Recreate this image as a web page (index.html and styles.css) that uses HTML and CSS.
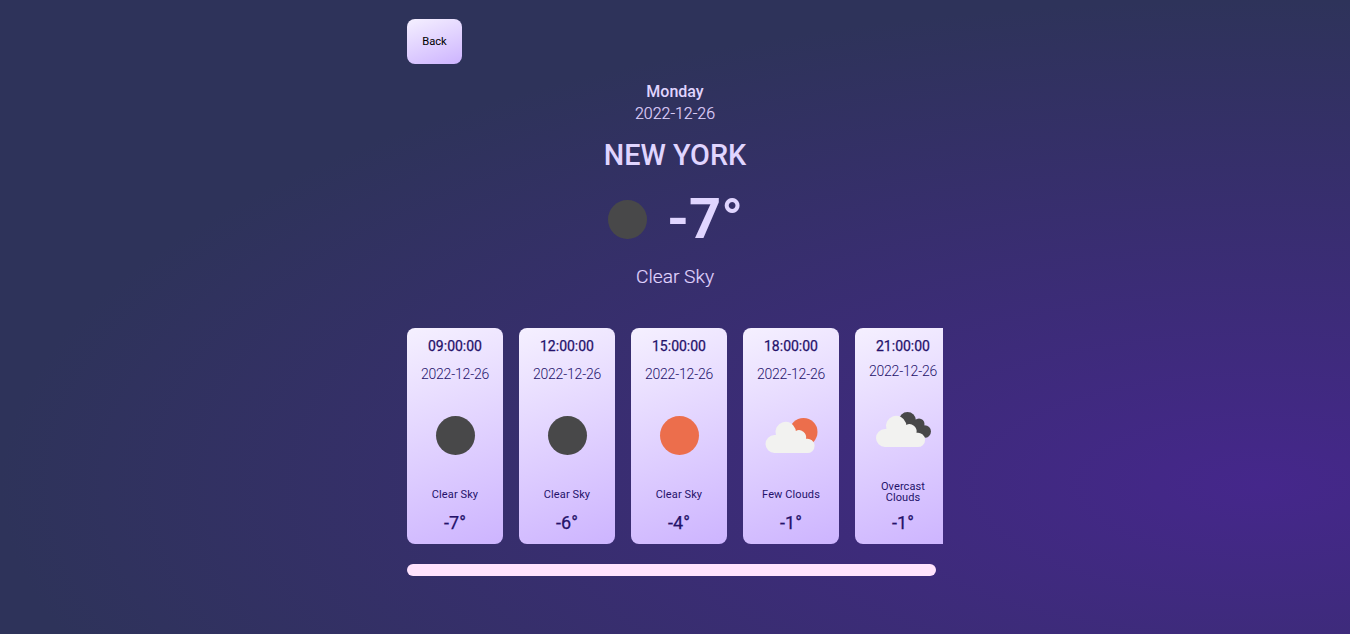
FILE: index.html
```html
<!DOCTYPE html>
<html lang="en">
<head>
<meta charset="utf-8">
<title>Weather</title>
<link rel="stylesheet" href="styles.css">
</head>
<body>
<main class="page">
  <button class="back">Back</button>
  <section class="current">
    <h3 class="day">Monday</h3>
    <p class="date">2022-12-26</p>
    <h1 class="city">NEW YORK</h1>
    <div class="now">
      <svg class="icon" viewBox="0 0 80 80"><circle cx="40.500" cy="39.500" r="19.500" fill="#484849"/></svg>
      <span class="temp">-7°</span>
    </div>
    <p class="summary">Clear Sky</p>
  </section>
  <section class="hours">
    <article class="card">
      <h4 class="time">09:00:00</h4><p class="card-date">2022-12-26</p>
      <svg class="icon" viewBox="0 0 80 80"><circle cx="40.500" cy="39.500" r="19.500" fill="#484849"/></svg>
      <p class="desc">Clear Sky</p><p class="deg">-7°</p>
    </article>
    <article class="card">
      <h4 class="time">12:00:00</h4><p class="card-date">2022-12-26</p>
      <svg class="icon" viewBox="0 0 80 80"><circle cx="40.500" cy="39.500" r="19.500" fill="#484849"/></svg>
      <p class="desc">Clear Sky</p><p class="deg">-6°</p>
    </article>
    <article class="card">
      <h4 class="time">15:00:00</h4><p class="card-date">2022-12-26</p>
      <svg class="icon" viewBox="0 0 80 80"><circle cx="40.500" cy="39.500" r="19.500" fill="#ec6e4c"/></svg>
      <p class="desc">Clear Sky</p><p class="deg">-4°</p>
    </article>
    <article class="card">
      <h4 class="time">18:00:00</h4><p class="card-date">2022-12-26</p>
      <svg class="icon" viewBox="0 0 80 80">
        <circle cx="52.500" cy="36" r="14" fill="#ec6e4c"/>
        <path fill="#f2f2f0" d="M23.500 57a9 9 0 0 1 0-18q.7 0 1.400.1A10.200 10.200 0 0 1 44.500 33Q44.800 34.500 44.800 34.900A7.200 7.200 0 0 1 55 42.800A7.200 7.200 0 1 1 55.500 57z"/>
      </svg>
      <p class="desc">Few Clouds</p><p class="deg">-1°</p>
    </article>
    <article class="card">
      <h4 class="time">21:00:00</h4><p class="card-date">2022-12-26</p>
      <svg class="icon" viewBox="0 0 80 80">
        <g transform="translate(0 -1.500)">
          <g fill="#484849"><circle cx="44.500" cy="31" r="8.500"/><circle cx="56" cy="34.500" r="5.500"/><circle cx="61.700" cy="42" r="6.300"/><path d="M42 38l13-8 8 15-5 2z"/></g>
          <path fill="#f2f2f0" d="M22 57.500a9 9 0 0 1 0-18q.7 0 1.400.1A10.200 10.200 0 0 1 43 33.500Q43.300 35 43.300 35.400A7.200 7.200 0 0 1 53.500 43.300A7.200 7.200 0 1 1 54 57.500z"/>
        </g>
      </svg>
      <p class="desc two-line">Overcast Clouds</p><p class="deg">-1°</p>
    </article>
  </section>
  <div class="scroll-thumb"></div>
</main>
</body>
</html>
```
FILE: styles.css
```css
* { box-sizing: border-box; margin: 0; padding: 0; }
html { height: 100%; }
body {
  height: 100%;
  overflow: hidden;
  font-family: Roboto, "Liberation Sans", sans-serif;
  color: #e0d5ff;
  background: radial-gradient(ellipse farthest-side at 93.5% 76.5%, #45278b, #2e335a);
}
.page { width: 536px; margin: 0 auto; padding-top: 19px; display: flex; flex-direction: column; }
.back {
  width: 55px; height: 45px; border: 0; border-radius: 8px;
  font: 400 11.2px Roboto, sans-serif; color: #000;
  background: linear-gradient(160deg, #f5f0ff, #cdb4ff);
}
.current { display: flex; flex-direction: column; align-items: center; padding-top: 18px; }
.day { font-size: 16px; line-height: 20px; font-weight: 500; }
.date { font-size: 16px; line-height: 20px; font-weight: 300; margin-top: 2px; }
.city { font-size: 28.8px; line-height: 34px; font-weight: 500; margin-top: 14px; }
.now { display: flex; align-items: center; height: 80px; margin-top: 8px; padding-right: 20px; }
.icon { display: block; width: 80px; height: 80px; flex: none; }
.temp { font-size: 56px; line-height: 78px; font-weight: 700; margin-bottom: 2px; }
.date, .summary { -webkit-text-stroke: 0.15px; }
.summary { font-size: 19.2px; line-height: 24px; font-weight: 300; margin-top: 5px; }
.hours { display: flex; gap: 16px; overflow: hidden; margin-top: 39px; }
.card {
  flex: 0 0 96px; height: 216px; padding: 10px 8px 11px; border-radius: 8px;
  display: flex; flex-direction: column; align-items: center; justify-content: space-between;
  text-align: center; color: #24126a;
  background: linear-gradient(160deg, #f5f0ff, #cdb4ff);
}
.time { font-size: 14px; line-height: 16px; font-weight: 400; -webkit-text-stroke: 0.25px; }
.card-date { font-size: 14px; line-height: 16px; font-weight: 300; letter-spacing: -0.2px; margin: -2px 0 1px; }
.card .icon { margin-bottom: -1px; }
.desc { max-width: 64px; font-size: 11px; line-height: 11px; font-weight: 400; letter-spacing: 0.1px; margin-bottom: -1px; }
.two-line { margin: 1px 0 -2px; }
.deg { font-size: 18px; line-height: 21px; font-weight: 400; -webkit-text-stroke: 0.25px; }
.scroll-thumb { width: 529px; height: 12px; margin-top: 20px; border-radius: 6px; background: #ffe3fd; }
```
